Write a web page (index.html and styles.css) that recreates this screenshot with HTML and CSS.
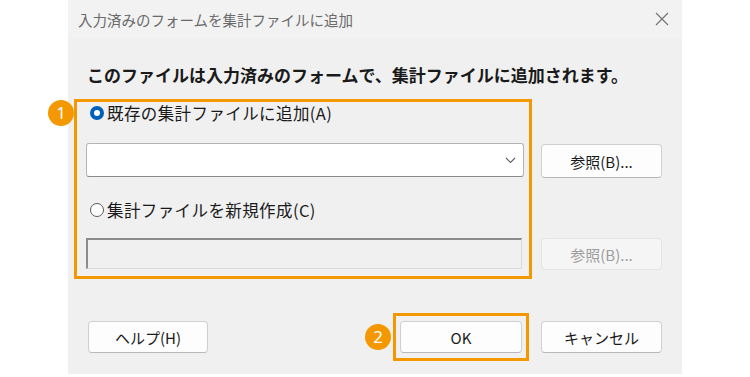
FILE: index.html
```html
<!DOCTYPE html>
<html lang="ja">
<head>
    <meta charset="UTF-8">
    <title>入力済みのフォームを集計ファイルに追加</title>
    <link rel="stylesheet" href="styles.css">
</head>
<body>
    <div class="dialog">
        <div class="title-bar">
            <span class="title">入力済みのフォームを集計ファイルに追加</span>
            <svg class="close" width="14" height="14" viewBox="0 0 14 14">
                <path d="M1 1 L13 13 M13 1 L1 13" stroke="#707070" stroke-width="1.1" fill="none"/>
            </svg>
        </div>

        <p class="lead">このファイルは入力済みのフォームで、集計ファイルに追加されます。</p>

        <div class="main-row">
            <div class="group">
                <span class="badge badge-one">1</span>
                <label class="radio-row">
                    <span class="radio checked"></span>
                    <span>既存の集計ファイルに追加(A)</span>
                </label>
                <div class="combo">
                    <svg class="chevron" width="11" height="7" viewBox="0 0 11 7">
                        <path d="M1 1 L5.5 5.5 L10 1" stroke="#606060" stroke-width="1.1" fill="none"/>
                    </svg>
                </div>
                <label class="radio-row second">
                    <span class="radio"></span>
                    <span>集計ファイルを新規作成(C)</span>
                </label>
                <div class="field-disabled"></div>
            </div>
            <div class="side">
                <button class="btn browse">参照(B)...</button>
                <button class="btn browse disabled">参照(B)...</button>
            </div>
        </div>

        <div class="footer">
            <button class="btn help">ヘルプ(H)</button>
            <div class="ok-frame">
                <span class="badge badge-two">2</span>
                <button class="btn ok">OK</button>
            </div>
            <button class="btn cancel">キャンセル</button>
        </div>
    </div>
</body>
</html>
```

FILE: styles.css
```css
body {
    margin: 0;
    background: #ffffff;
    font-family: "Noto Sans CJK JP", "Noto Sans", sans-serif;
    color: #1a1a1a;
}

.dialog {
    margin-left: 68px;
    width: 614px;
    height: 374px;
    background: #f0f0f0;
}

.title-bar {
    height: 38px;
    display: flex;
    align-items: center;
    justify-content: space-between;
    padding: 0 13px 0 10px;
    background: #f2f2f2;
}

.title {
    font-size: 14.5px;
    color: #6a6a6a;
}

.lead {
    margin: 25px 0 0 19px;
    font-size: 17px;
    line-height: 24px;
    font-weight: bold;
}

.main-row {
    display: flex;
    gap: 9px;
    margin: 12px 0 0 6px;
}

/* orange highlight frame around the option group */
.group {
    position: relative;
    width: 452px;
    border: 3px solid #f39800;
    padding: 0 0 7px 0;
}

.badge {
    position: absolute;
    width: 26px;
    height: 26px;
    border-radius: 50%;
    background: #f39800;
    color: #ffffff;
    font-family: "Noto Sans", sans-serif;
    font-size: 17px;
    line-height: 26px;
    text-align: center;
}

.badge-one {
    left: -29px;
    top: -2px;
}

.radio-row {
    display: flex;
    align-items: center;
    gap: 3px;
    height: 22px;
    margin-left: 13px;
    font-size: 16.5px;
    letter-spacing: 0.4px;
}

.radio-row.second {
    margin-top: 22px;
}

.radio {
    width: 14px;
    height: 14px;
    box-sizing: border-box;
    border-radius: 50%;
    border: 1px solid #5a5a5a;
    background: #ffffff;
}

.radio.checked {
    border: 4px solid #005fb8;
    background: #ffffff;
}

.combo {
    position: relative;
    margin: 19px 0 0 9px;
    width: 438px;
    height: 34px;
    box-sizing: border-box;
    background: #ffffff;
    border: 1px solid #b4b4b4;
    border-bottom-color: #8a8a8a;
    border-radius: 3px;
}

.chevron {
    position: absolute;
    right: 7px;
    top: 13px;
}

.field-disabled {
    margin: 17px 0 0 9px;
    width: 436px;
    height: 31px;
    box-sizing: border-box;
    background: #f0f0f0;
    border: 1px solid #dadada;
    border-top: 2px solid #8c8c8c;
    border-left: 2px solid #8c8c8c;
}

.side {
    display: flex;
    flex-direction: column;
    width: 121px;
}

.btn {
    box-sizing: border-box;
    background: #fdfdfd;
    border: 1px solid #d0d0d0;
    border-bottom-color: #b8b8b8;
    border-radius: 4px;
    font-family: "Noto Sans CJK JP", "Noto Sans", sans-serif;
    font-size: 15px;
    color: #1a1a1a;
    padding: 0;
}

.browse {
    margin-top: 45px;
    height: 34px;
}

.browse.disabled {
    margin-top: 60px;
    height: 32px;
    background: #f5f5f5;
    border-color: #e4e4e4;
    color: #9d9d9d;
}

.footer {
    display: flex;
    align-items: center;
    margin: 34px 0 0 20px;
}

.help {
    width: 120px;
    height: 32px;
}

.ok-frame {
    position: relative;
    margin-left: 185px;
    border: 3px solid #f39800;
    padding: 5px 4px 5px 4px;
}

.badge-two {
    left: -31px;
    top: 8px;
}

.ok {
    display: block;
    width: 122px;
    height: 32px;
}

.cancel {
    margin-left: 12px;
    width: 121px;
    height: 32px;
}
```
